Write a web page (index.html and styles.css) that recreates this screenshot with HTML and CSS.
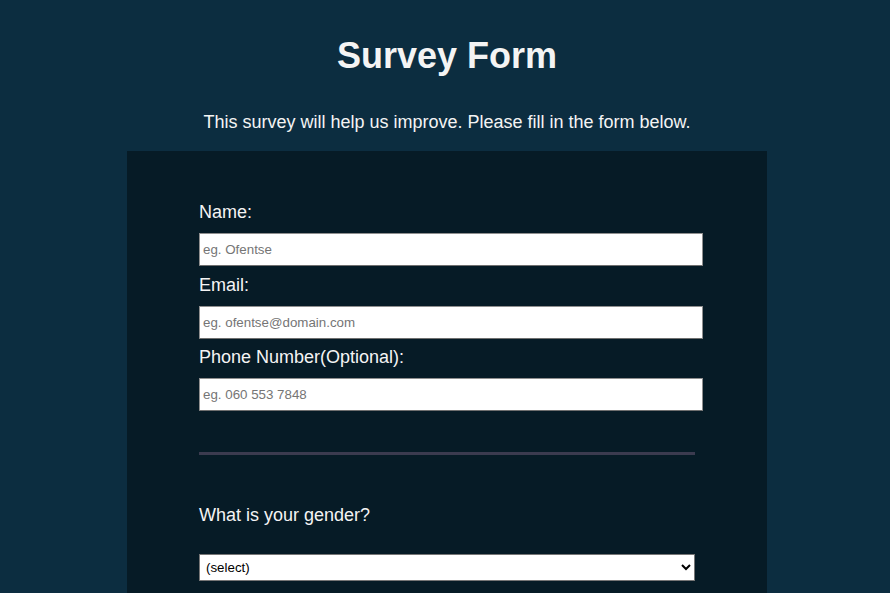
FILE: index.html
```html
<!DOCTYPE html>
<html lang="en">
<head>
<meta charset="utf-8">
<title>Survey Form</title>
<link rel="stylesheet" href="styles.css">
</head>
<body>
<div class="page">
  <h1 class="title">Survey Form</h1>
  <p class="description">This survey will help us improve. Please fill in the form below.</p>
  <form class="survey">
    <div class="field">
      <label class="label" for="name">Name:</label>
      <input class="text-input" id="name" type="text" placeholder="eg. Ofentse">
    </div>
    <div class="field">
      <label class="label" for="email">Email:</label>
      <input class="text-input" id="email" type="email" placeholder="eg. ofentse@domain.com">
    </div>
    <div class="field">
      <label class="label" for="phone">Phone Number(Optional):</label>
      <input class="text-input" id="phone" type="text" placeholder="eg. 060 553 7848">
    </div>
    <hr class="divider">
    <div class="question">
      <p class="question-label">What is your gender?</p>
      <select class="dropdown">
        <option>(select)</option>
        <option>Male</option>
        <option>Female</option>
        <option>Other</option>
      </select>
    </div>
  </form>
</div>
</body>
</html>
```

FILE: styles.css
```css
html, body {
  margin: 0;
  padding: 0;
}

body {
  background: #0c2d40;
  color: #f4f4f4;
  font-family: "Liberation Sans", Arial, sans-serif;
  overflow: hidden;
}

.page {
  padding: 8px 0 0 4px;
  display: flex;
  flex-direction: column;
  align-items: center;
}

.title {
  font-size: 36px;
  font-weight: bold;
  margin: 27px 0 0;
  line-height: 41px;
}

.description {
  font-size: 18px;
  margin: 36px 0 0;
  line-height: 21px;
}

.survey {
  box-sizing: border-box;
  width: 640px;
  margin-top: 18px;
  padding: 51px 72px 40px;
  background: #061b26;
}

.field {
  display: flex;
  flex-direction: column;
  margin-bottom: 8.5px;
}

.label {
  font-size: 18px;
  line-height: 21px;
  margin-bottom: 10px;
}

.text-input {
  width: 100%;
  box-sizing: content-box;
  height: 31px;
  padding: 0 3px;
  margin: 0;
  border: 1px solid #8f8f8f;
  border-bottom-color: #6f6f6f;
  background: #fff;
  font-family: "Liberation Sans", Arial, sans-serif;
  font-size: 13.33px;
}

.text-input::placeholder {
  color: #757575;
}

.divider {
  border: none;
  height: 3px;
  background: #3b3b4f;
  margin: 41px 0 0;
}

.question {
  padding-top: 50px;
}

.question-label {
  margin: 0 0 28px;
  font-size: 18px;
  line-height: 21px;
}

.dropdown {
  width: 100%;
  height: 27px;
  font-family: "Liberation Sans", Arial, sans-serif;
  font-size: 13.33px;
  color: #000;
  background: #fff;
  border: 1px solid #767676;
  border-radius: 0;
  padding: 0 2px;
}
```
